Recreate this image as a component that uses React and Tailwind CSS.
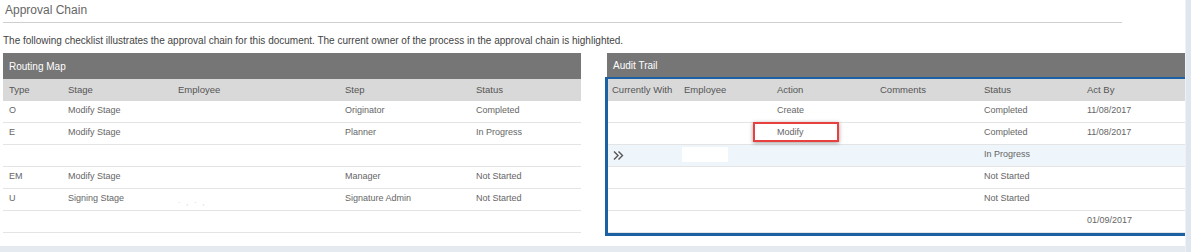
import React from "react";

const font = { fontFamily: '"Liberation Sans", Arial, sans-serif' };

const routingCols = [
  { label: "Type", w: "w-[59px]" },
  { label: "Stage", w: "w-[110px]" },
  { label: "Employee", w: "w-[167px]" },
  { label: "Step", w: "w-[131px]" },
  { label: "Status", w: "w-[111px]" },
];

const routingRows = [
  ["O", "Modify Stage", "", "Originator", "Completed"],
  ["E", "Modify Stage", "", "Planner", "In Progress"],
  ["", "", "", "", ""],
  ["EM", "Modify Stage", "", "Manager", "Not Started"],
  ["U", "Signing Stage", "faint", "Signature Admin", "Not Started"],
  ["", "", "", "", ""],
];

const auditCols = [
  { label: "Currently With", w: "w-[71px]", pad: "pl-[4px]" },
  { label: "Employee", w: "w-[93px]", pad: "pl-[5px]" },
  { label: "Action", w: "w-[103px]", pad: "pl-[5px]" },
  { label: "Comments", w: "w-[104px]", pad: "pl-[5px]" },
  { label: "Status", w: "w-[103px]", pad: "pl-[5px]" },
  { label: "Act By", w: "w-[103px]", pad: "pl-[5px]" },
];

const auditRows = [
  { cells: ["", "", "Create", "", "Completed", "11/08/2017"] },
  { cells: ["", "", "Modify", "", "Completed", "11/08/2017"], flagged: true },
  { cells: ["chev", "box", "", "", "In Progress", ""], current: true },
  { cells: ["", "", "", "", "Not Started", ""] },
  { cells: ["", "", "", "", "Not Started", ""] },
  { cells: ["", "", "", "", "", "01/09/2017"] },
];

function DoubleChevron() {
  return (
    <svg width="11" height="11" viewBox="0 0 11 11" fill="none">
      <path d="M1 1.5 L5 5.5 L1 9.5" stroke="#555" strokeWidth="1.4" />
      <path d="M5.5 1.5 L9.5 5.5 L5.5 9.5" stroke="#555" strokeWidth="1.4" />
    </svg>
  );
}

function RoutingMap() {
  return (
    <div className="w-[578px] flex flex-col">
      <div className="h-[26px] bg-[#767676] flex items-center pl-[6px] text-[10px] text-white">
        Routing Map
      </div>
      <div className="h-[22px] bg-[#d9d9d9] flex items-center text-[9.5px] text-[#555]">
        {routingCols.map((c) => (
          <div key={c.label} className={`${c.w} pl-[6px]`}>
            {c.label}
          </div>
        ))}
      </div>
      {routingRows.map((r, i) => (
        <div
          key={i}
          className="h-[22px] border-b border-[#e4e4e4] flex items-start pt-[4px] text-[9px] leading-[11px] text-[#666]"
        >
          {r.map((v, j) => (
            <div key={j} className={`${routingCols[j].w} pl-[6px]`}>
              {v === "faint" ? (
                <span className="inline-block mt-[4px] text-[7px] text-[#c8c8c8] tracking-[6px]">
                  ·,·,
                </span>
              ) : (
                v
              )}
            </div>
          ))}
        </div>
      ))}
    </div>
  );
}

function AuditTrail() {
  return (
    <div className="w-[580px] flex flex-col">
      <div className="ml-[2px] h-[24px] bg-[#767676] flex items-center pl-[6px] text-[10px] text-white">
        Audit Trail
      </div>
      <div className="border-l-[3px] border-t-[2px] border-b-[3px] border-[#1c61a3]">
        <div className="h-[22px] bg-[#d9d9d9] flex items-center text-[9.5px] text-[#555]">
          {auditCols.map((c) => (
            <div key={c.label} className={`${c.w} ${c.pad} whitespace-nowrap`}>
              {c.label}
            </div>
          ))}
        </div>
        {auditRows.map((r, i) => (
          <div
            key={i}
            className={`h-[22px] border-b border-[#e4e4e4] flex items-start pt-[4px] text-[9px] leading-[11px] text-[#666] ${
              r.current ? "bg-[#eef5fb]" : "bg-white"
            }`}
          >
            {r.cells.map((v, j) => (
              <div key={j} className={`${auditCols[j].w} ${auditCols[j].pad} relative`}>
                {v === "chev" ? (
                  <div className="pl-[1px] pt-[1px]">
                    <DoubleChevron />
                  </div>
                ) : v === "box" ? (
                  <div className="absolute left-[3px] top-[-2px] w-[46px] h-[15px] bg-white" />
                ) : (
                  v
                )}
                {r.flagged && j === 2 && (
                  <div className="absolute left-[-19px] top-[-5px] w-[86px] h-[20px] border-2 border-[#e8403f] shadow-[0_1px_4px_rgba(0,0,0,0.4)]" />
                )}
              </div>
            ))}
          </div>
        ))}
      </div>
    </div>
  );
}

export default function App() {
  return (
    <div className="w-[1191px] h-[252px] flex bg-white overflow-hidden" style={font}>
      <div className="flex-1 flex flex-col">
        <div className="h-[246px] pl-[3px] pt-[3px]">
          <div className="pl-[2px] h-[14px] leading-[14px] text-[12px] text-[#666]">
            Approval Chain
          </div>
          <div className="mt-[5px] w-[1119px] h-[1px] bg-[#cfcfcf]" />
          <div className="mt-[12px] h-[12px] leading-[12px] text-[10px] text-[#444] whitespace-nowrap">
            The following checklist illustrates the approval chain for this document. The current
            owner of the process in the approval chain is highlighted.
          </div>
          <div className="mt-[6px] flex gap-[24px]">
            <RoutingMap />
            <AuditTrail />
          </div>
        </div>
        <div className="h-[6px] bg-[#e4eaf0]" />
      </div>
      <div className="w-[6px] bg-[#dfe6ee] border-l border-[#eef2f6]" />
    </div>
  );
}
